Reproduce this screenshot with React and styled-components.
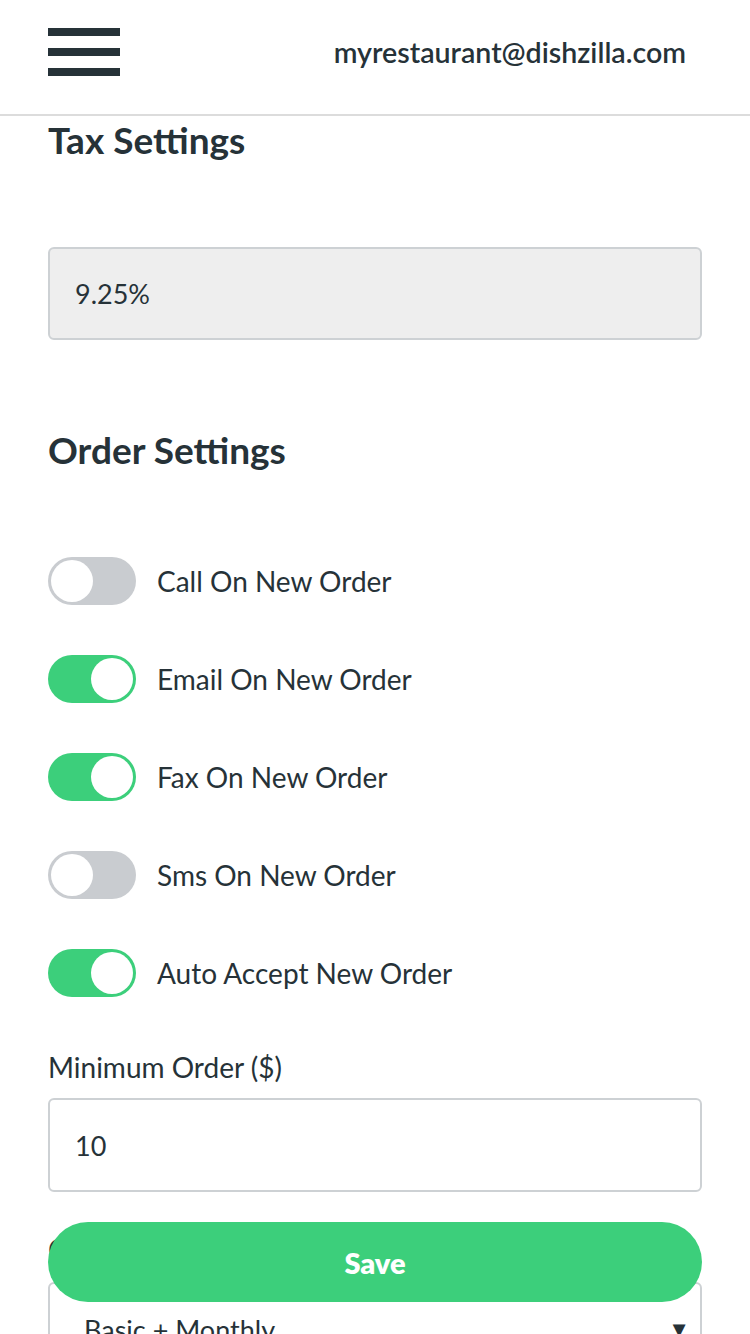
import React, { useState } from 'react'
import styled, { createGlobalStyle } from 'styled-components'

const GlobalStyle = createGlobalStyle`
  html, body {
    margin: 0;
    padding: 0;
    background: #fff;
    font-family: Lato, "Noto Sans", "Liberation Sans", sans-serif;
    color: #263238;
  }
  * { box-sizing: border-box; }
`

const Header = styled.header`
  height: 116px;
  border-bottom: 2px solid #dcdcdc;
  display: flex;
  align-items: flex-start;
  justify-content: space-between;
  padding: 28px 64px 0 48px;
`

const Burger = styled.div`
  width: 72px;
  display: flex;
  flex-direction: column;
  gap: 12px;

  span {
    display: block;
    height: 8px;
    background: #263238;
  }
`

const Email = styled.div`
  font-size: 28.6px;
  font-weight: 600;
  line-height: 48px;
`

const Content = styled.main`
  padding: 2px 48px 120px;
`

const Title = styled.h2`
  margin: ${p => p.$top || 0}px 0 0;
  font-size: 37px;
  line-height: 44px;
  font-weight: 700;
`

const Field = styled.div`
  height: ${p => p.$height || 93}px;
  border: 2px solid #cdd1d4;
  border-radius: 6px;
  background: ${p => (p.$disabled ? '#eeeeee' : '#fff')};
  display: flex;
  align-items: center;
  justify-content: space-between;
  padding: 0 ${p => p.$padRight || 25}px 0 ${p => p.$pad || 25}px;
  font-size: 27px;
  margin-top: ${p => p.$top || 0}px;
`

const ToggleList = styled.div`
  margin-top: 85px;
  display: flex;
  flex-direction: column;
  gap: 50px;
`

const ToggleRow = styled.label`
  display: flex;
  align-items: center;
  gap: 21px;
  font-size: 28px;
  cursor: pointer;
`

const Track = styled.span`
  position: relative;
  width: 88px;
  height: 48px;
  border-radius: 24px;
  background: ${p => (p.$on ? '#3ccf7b' : '#c9ccd0')};
  flex-shrink: 0;

  &::after {
    content: '';
    position: absolute;
    top: 3px;
    left: ${p => (p.$on ? '43px' : '3px')};
    width: 42px;
    height: 42px;
    border-radius: 50%;
    background: #fff;
  }
`

const Label = styled.div`
  font-size: 28px;
  line-height: 34px;
  margin-top: ${p => p.$top}px;
`

const SaveButton = styled.button`
  position: fixed;
  left: 48px;
  right: 48px;
  bottom: 32px;
  height: 80px;
  border: none;
  border-radius: 40px;
  background: #3ccf7b;
  color: #fff;
  font-family: Lato, "Noto Sans", sans-serif;
  font-size: 29px;
  font-weight: 800;
  cursor: pointer;
`

const Caret = styled.span`
  font-size: 22px;
`

const toggles = [
  ['Call On New Order', false],
  ['Email On New Order', true],
  ['Fax On New Order', true],
  ['Sms On New Order', false],
  ['Auto Accept New Order', true],
]

export default function App() {
  const [state, setState] = useState(toggles.map(t => t[1]))

  return (
    <>
      <GlobalStyle />
      <Header>
        <Burger>
          <span />
          <span />
          <span />
        </Burger>
        <Email>myrestaurant@dishzilla.com</Email>
      </Header>
      <Content>
        <Title>Tax Settings</Title>
        <Field $disabled $top={85}>9.25%</Field>

        <Title $top={88}>Order Settings</Title>
        <ToggleList>
          {toggles.map(([name], i) => (
            <ToggleRow key={name} onClick={() => setState(s => s.map((v, j) => (j === i ? !v : v)))}>
              <Track $on={state[i]} />
              {name}
            </ToggleRow>
          ))}
        </ToggleList>

        <Label $top={53}>Minimum Order ($)</Label>
        <Field $top={14} $height={94}>10</Field>

        <Label $top={40}>Current Plan</Label>
        <Field $top={16} $height={94} $pad={34} $padRight={10}>
          <span>Basic + Monthly</span>
          <Caret>▼</Caret>
        </Field>
      </Content>
      <SaveButton>Save</SaveButton>
    </>
  )
}
